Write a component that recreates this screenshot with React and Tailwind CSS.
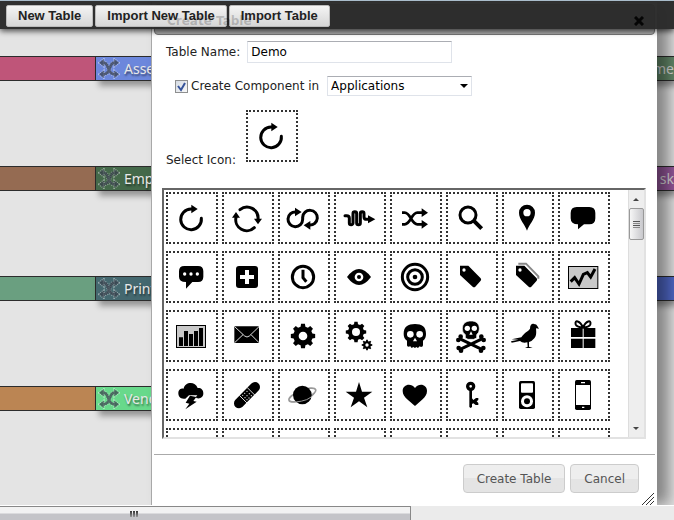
import React from "react";

const laneFont = "font-['Noto_Sans','Open_Sans',sans-serif]";
const dialogFont = "font-['DejaVu_Sans',Verdana,sans-serif]";

function gearPath(cx, cy, outer, inner, teeth, hole) {
  const pts = [];
  const step = (Math.PI * 2) / teeth;
  for (let i = 0; i < teeth; i += 1) {
    const a = i * step - Math.PI / 2;
    [
      [-0.32, inner],
      [-0.2, outer],
      [0.2, outer],
      [0.32, inner],
    ].forEach(([f, r]) => {
      pts.push(`${(cx + Math.cos(a + f * step) * r).toFixed(1)} ${(cy + Math.sin(a + f * step) * r).toFixed(1)}`);
    });
  }
  return `M${pts.join("L")}ZM${cx - hole} ${cy}a${hole} ${hole} 0 1 0 ${hole * 2} 0a${hole} ${hole} 0 1 0 ${-hole * 2} 0Z`;
}

const line = { fill: "none", stroke: "#000", strokeWidth: 9 };

const icons = [
  ["Reload", <>
    <path {...line} d="M106 79A31 31 0 1 1 75 51H80" strokeLinecap="round" />
    <path d="M76 38 95 51 76 64Z" />
  </>],
  ["Sync", <>
    <path {...line} d="M54 53A33 33 0 0 1 108 82M97 107A33 33 0 0 1 42 76" strokeLinecap="round" />
    <path d="M30 77H54L42 60ZM96 80H120L108 97Z" />
  </>],
  ["Loop", <>
    <path {...line} d="M54 60A22 22 0 1 0 74 82V76A22 22 0 1 1 94 99" />
    <path d="M51 47 71 60 51 73ZM97 87V113L77 100Z" />
  </>],
  ["Coil", <>
    <path {...line} d="M33 71H38Q46 71 46 79V93A5.500 5.500 0 0 0 57 93V65A5.500 5.500 0 0 1 68 65V93A5.500 5.500 0 0 0 79 93V65A5.500 5.500 0 0 1 90 65V74Q90 82 98 82H106" strokeLinecap="round" />
    <path d="M102 70V94L124 82Z" />
  </>],
  ["Shuffle", <>
    <path {...line} strokeWidth={8} d="M36 62H44C62 62 64 97 82 97H99M36 97H44C62 97 64 62 82 62H99" />
    <path d="M95 49 114 62 95 75ZM95 84 114 97 95 110Z" />
  </>],
  ["Search", <>
    <circle {...line} strokeWidth={9} cx="66" cy="69" r="24" />
    <path {...line} strokeWidth={12} d="M83 86 107 110" />
  </>],
  ["Place", <path fillRule="evenodd" d="M75 116C69 97 51 82 51 62A24 24 0 0 1 99 62C99 82 81 97 75 116ZM64 62A11 11 0 1 0 86 62A11 11 0 1 0 64 62Z" />],
  ["Comment", <path d="M56 45H94Q112 45 112 63V79Q112 97 94 97H78L60 112V97Q38 97 38 79V63Q38 45 56 45Z" />],
  ["Chat", <>
    <path d="M55 45H96Q112 45 112 61V77Q112 93 96 93H79L60 113V93Q39 93 39 77V61Q39 45 55 45Z" />
    <g fill="#fff"><circle cx="56" cy="69" r="5" /><circle cx="75" cy="69" r="5" /><circle cx="94" cy="69" r="5" /></g>
  </>],
  ["Add", <>
    <rect x="42" y="45" width="66" height="66" rx="9" />
    <path d="M75 57V99M54 78H96" stroke="#fff" strokeWidth="12" />
  </>],
  ["Clock", <>
    <circle {...line} cx="75" cy="78" r="32" />
    <path {...line} d="M75 56V80L85 92" />
  </>],
  ["Eye", <>
    <path d="M39 78Q57 54 75 54T111 78Q93 102 75 102T39 78Z" />
    <circle cx="75" cy="78" r="13" fill="#fff" /><circle cx="75" cy="78" r="6" />
  </>],
  ["Target", <>
    <circle {...line} cx="75" cy="78" r="38" /><circle {...line} cx="75" cy="78" r="22" /><circle cx="75" cy="78" r="7" />
  </>],
  ["Tag", <>
    <path d="M42 44H67L104 82Q107 86 104 89L88 107Q84 110 80 107L42 72Z" />
    <circle cx="54" cy="57" r="5" fill="#fff" />
  </>],
  ["Tags", <>
    <path d="M49 38H72L109 76V83" fill="none" stroke="#888" strokeWidth="6" />
    <path d="M42 44H67L104 82Q107 86 104 89L88 107Q84 110 80 107L42 72Z" />
    <circle cx="54" cy="57" r="5" fill="#fff" />
  </>],
  ["Line chart", <>
    <rect x="31.500" y="46.500" width="88" height="66" fill="#c9c9c9" stroke="#000" strokeWidth="3" />
    <path {...line} d="M38 92 50 80 63 99 76 70 88 65 98 78 111 54" />
  </>],
  ["Bar chart", <>
    <rect x="31.500" y="46.500" width="87" height="66" fill="#c9c9c9" stroke="#000" strokeWidth="3" />
    <path d="M39 82H51V108H39ZM54 63H66V108H54ZM69 72H81V108H69ZM84 63H96V108H84ZM99 54H111V108H99Z" />
  </>],
  ["Mail", <>
    <rect x="37" y="49" width="74" height="50" rx="2" />
    <path d="M38 50 68 78Q75 84 82 78L111 50M38 98 63 74M111 98 87 74" fill="none" stroke="#ddd" strokeWidth="3" />
  </>],
  ["Gear", <path fillRule="evenodd" d={gearPath(75, 78, 37, 29, 8, 13)} />],
  ["Gears", <path fillRule="evenodd" d={gearPath(66, 66, 31, 24, 8, 12) + gearPath(99, 105, 16, 12, 8, 5)} />],
  ["Skull", <>
    <path d="M41 72C41 50 54 42 75 42S108 50 108 72Q108 86 99 92V106Q99 111 93 111L89 109 84 114 79 111 75 114 70 111 65 114 61 109Q51 112 51 106V92Q41 86 41 72Z" />
    <g fill="#fff"><circle cx="61" cy="73" r="10" /><circle cx="89" cy="73" r="10" /><path d="M75 83 81 94H69Z" /></g>
  </>],
  ["Poison", <>
    <path d="M39 85 109 119M111 85 41 119" stroke="#000" strokeWidth="9" />
    <circle cx="37" cy="90" r="7" /><circle cx="44" cy="80" r="7" /><circle cx="113" cy="90" r="7" /><circle cx="106" cy="80" r="7" />
    <circle cx="38" cy="114" r="7" /><circle cx="45" cy="122" r="7" /><circle cx="112" cy="114" r="7" /><circle cx="105" cy="122" r="7" />
    <path d="M49 57C49 40 60 33 75 33S100 40 100 57Q100 68 92 74V84L83 88H66L58 84V74Q49 68 49 57Z" stroke="#fff" strokeWidth="2" />
    <g fill="#fff"><circle cx="64" cy="55" r="8" /><circle cx="85" cy="55" r="8" /><path d="M75 64 80 74H70Z" /></g>
  </>],
  ["Bird", <path d="M27 94 49 89 29 88 58 82C67 67 78 65 84 56C84 44 90 40 96 42Q104 42 106 48L111 56 102 55C103 66 104 78 97 85Q91 93 81 96L81 110 92 114H69L77 110 76 97Q61 100 54 93L29 98Z" />],
  ["Gift", <>
    <path d="M39 54H74V81H39ZM77 54H112V81H77ZM39 86H74V114H39ZM77 86H112V114H77Z" />
    <path d="M75 53C66 31 49 29 53 43Q56 51 75 53C84 31 101 29 97 43Q94 51 75 53Z" fill="none" stroke="#000" strokeWidth="6" />
  </>],
  ["Storm", <>
    <path d="M53 89C42 89 37 82 37 73C37 62 45 58 53 59C56 39 87 35 95 57C105 56 112 62 112 73C112 84 104 90 93 88L89 85 94 79H69L58 89Z" />
    <path d="M72 80 91 84 82 96 92 98 58 121 70 104 59 101Z" />
  </>],
  ["Bandage", <>
    <path d="M51 103 99 54" stroke="#000" strokeWidth="30" strokeLinecap="round" />
    <path d="M52 79 76 103M75 55 99 79" stroke="#ddd" strokeWidth="3" />
    <g fill="#ddd"><circle cx="75" cy="67" r="2" /><circle cx="82" cy="74" r="2" /><circle cx="88" cy="80" r="2" /><circle cx="68" cy="73" r="2" /><circle cx="75" cy="80" r="2" /><circle cx="81" cy="87" r="2" /><circle cx="62" cy="79" r="2" /><circle cx="69" cy="86" r="2" /><circle cx="75" cy="92" r="2" /></g>
  </>],
  ["Planet", <>
    <ellipse cx="73" cy="78" rx="43" ry="14" fill="none" stroke="#999" strokeWidth="5" transform="rotate(-22 73 78)" />
    <circle cx="73" cy="78" r="28" />
    <path d="M33 96Q53 103 86 92Q102 85 110 73" fill="none" stroke="#999" strokeWidth="3" />
  </>],
  ["Star", <path d="M75 39 84 68H115L90 86 100 115 75 97 50 115 60 86 35 68H66Z" />],
  ["Heart", <path d="M75 111C62 98 38 86 38 66C38 47 62 40 75 57C88 40 111 47 111 66C111 86 88 98 75 111Z" />],
  ["Key", <>
    <circle {...line} strokeWidth={10} cx="74" cy="52" r="9" />
    <path d="M70 62H78V88L82 93 90 87H97V93L92 97 97 102V108H89L82 103 78 105V114L74 117 70 114Z" />
  </>],
  ["Player", <>
    <rect x="51" y="36" width="48" height="84" rx="5" />
    <rect x="57" y="43" width="36" height="28" rx="3" fill="#fff" />
    <circle cx="75" cy="97" r="18" fill="#fff" /><circle cx="75" cy="97" r="9" />
  </>],
  ["Phone", <>
    <rect x="51" y="33" width="48" height="90" rx="5" />
    <path d="M54 48H96V108H54Z" fill="#fff" />
    <path d="M69 41H81M72 115H79" stroke="#fff" strokeWidth="4" />
  </>],
];

const spares = ["Slot 33", "Slot 34", "Slot 35", "Slot 36", "Slot 37", "Slot 38", "Slot 39", "Slot 40"];

function Glyph({ children }) {
  return (
    <svg viewBox="6 6 144 144" className="size-full" aria-hidden="true">
      {children}
    </svg>
  );
}

function JoinIcon() {
  const curve = "M4 4H5C11 4 8 16 16 16H17M4 16H5C13 16 10 4 16 4H17";
  const heads = "M0 4 5 0V8ZM21 4 16 0V8ZM0 16 5 12V20ZM21 16 16 12V20Z";
  return (
    <svg viewBox="-1 -1 23 22" className="h-[21px] w-[22px] shrink-0" aria-hidden="true">
      <g fill="none" stroke="#fff" strokeOpacity=".45">
        <path d={curve} strokeWidth="4" strokeDasharray="1 1" />
        <path d={heads} strokeWidth="2" strokeDasharray="1 1" />
      </g>
      <g opacity=".7">
        <path d={curve} fill="none" stroke="#333b47" strokeWidth="3" />
        <path d={heads} fill="#333b47" />
      </g>
    </svg>
  );
}

const lanes = [
  { name: "Assets", bar: "bg-[#bf5579]", node: "bg-[#6c87dc]", tail: "bg-[#64896a]", end: "me" },
  { name: "Employees", bar: "bg-[#956b52]", node: "bg-[#44694a]", tail: "bg-[#96589c]", end: "sk" },
  { name: "Printers", bar: "bg-[#6a9f80]", node: "bg-[#44686f]", tail: "bg-[#5068c8]", end: "" },
  { name: "Vendors", bar: "bg-[#bb8553]", node: "bg-[#68d98b]", tail: null, end: "" },
];

function Lane({ lane }) {
  return (
    <div className="flex h-[25px]">
      <div className={`w-24 border border-l-0 border-[#2c2c2c] ${lane.bar}`} />
      <div className={`flex w-40 items-center gap-1 border-y border-[#2c2c2c] pl-[2px] text-sm text-[#e8e8e8] shadow-[3px_5px_6px_rgba(0,0,0,.35)] [text-shadow:1px_2px_2px_rgba(0,0,0,.5)] ${lane.node}`}>
        <JoinIcon />
        {lane.name}
      </div>
      {lane.tail && (
        <div className={`ml-auto flex w-10 items-center justify-end border-y border-[#2c2c2c] text-sm text-[#ddd] shadow-[3px_5px_6px_rgba(0,0,0,.35)] ${lane.tail}`}>
          {lane.end}
        </div>
      )}
    </div>
  );
}

function ToolButton({ children }) {
  return (
    <button className="h-[22px] rounded-[2px] border border-[#bbb] bg-linear-to-b from-[#f4f4f4] to-[#d6d6d6] px-[11px] text-[13px] leading-5 font-bold whitespace-nowrap text-[#222]">
      {children}
    </button>
  );
}

function DialogButton({ children }) {
  return (
    <button className="h-[29px] rounded-[4px] border border-[#ccc] bg-linear-to-b from-[#eee] from-50% to-[#e4e4e4] to-50% px-[13px] whitespace-nowrap text-[#555]">
      {children}
    </button>
  );
}

function ListScrollbar() {
  return (
    <div className="flex w-4 shrink-0 flex-col items-center justify-between bg-[#eee] pb-1 shadow-[inset_1px_0_#ddd]">
      <div className="flex w-full flex-col items-center">
        <svg viewBox="0 0 8 4" className="my-[7px] h-1 w-2" aria-hidden="true"><path d="M1 4 4 1 7 4Z" fill="#444" /></svg>
        <div className="flex h-8 w-[15px] flex-col items-center justify-center gap-px rounded-[2px] border border-[#999] bg-linear-to-r from-[#f6f6f6] to-[#c8c8cc]">
          <i className="h-px w-[7px] bg-[#555]" />
          <i className="h-px w-[7px] bg-[#888]" />
          <i className="h-px w-[7px] bg-[#555]" />
          <i className="h-px w-[7px] bg-[#888]" />
        </div>
      </div>
      <svg viewBox="0 0 8 4" className="mb-[2px] h-1 w-2" aria-hidden="true"><path d="M1 0 4 3 7 0Z" fill="#444" /></svg>
    </div>
  );
}

function CreateTableDialog() {
  return (
    <section aria-label="Create Table" className={`absolute top-[2px] right-[17px] bottom-0 left-[151px] flex flex-col border-l border-[#a8a8a8] bg-white px-[2px] text-xs text-[#222] shadow-[12px_0_14px_rgba(0,0,0,.42)] ${dialogFont}`}>
      <header className="mt-[2px] flex h-[31px] shrink-0 items-center justify-between rounded-[4px] border border-[#777] bg-[#aaa] pt-[3px] pr-[10px] pl-3">
        <h2 className="pointer-events-none relative z-30 font-bold text-black/20">Create Table</h2>
        <button aria-label="Close" className="relative z-30">
          <svg viewBox="0 0 10 10" className="size-[10px]" aria-hidden="true"><path d="M1 1 9 9M9 1 1 9" stroke="#050505" strokeWidth="3" /></svg>
        </button>
      </header>
      <div className="px-2">
        <div className="mt-[6px] flex h-[22px] items-center gap-[7px] pl-1">
          <label htmlFor="table-name">Table Name:</label>
          <input id="table-name" defaultValue="Demo" className="h-[22px] w-[205px] border border-[#dfe3ea] border-t-[#abadb3] px-[3px] text-black" />
        </div>
        <div className="mt-[13px] flex h-5 items-center pl-[13px]">
          <input id="in-component" type="checkbox" defaultChecked className="size-[13px] appearance-none border border-[#8e8f8f] bg-linear-to-br from-[#d5dbe3] to-[#f8f8f8]" />
          <svg viewBox="0 0 13 13" className="pointer-events-none -ml-[13px] size-[13px]" aria-hidden="true"><path d="M3 6 6 10 10 3" fill="none" stroke="#35539a" strokeWidth="2" /></svg>
          <label htmlFor="in-component" className="ml-[3px]">Create Component in</label>
          <div className="ml-2 flex items-center">
            <select aria-label="Component" className="h-5 w-[145px] appearance-none border border-[#dfe3ea] border-t-[#abadb3] bg-white px-[3px] leading-4 text-black">
              <option>Applications</option>
            </select>
            <svg viewBox="0 0 8 4" className="pointer-events-none -ml-3 h-1 w-2" aria-hidden="true"><path d="M0 0 4 4 8 0Z" /></svg>
          </div>
        </div>
        <div className="mt-[14px] flex items-end gap-[10px] pl-1">
          <span className="-mb-2 leading-5">Select Icon:</span>
          <button aria-label="Selected icon" className="size-[52px] border-2 border-dotted border-[#333]">
            <Glyph>{icons[0][1]}</Glyph>
          </button>
        </div>
        <div className="mt-[26px] mr-[1px] flex h-[251px] border-2 border-t-[#666] border-r-[#e2e2e2] border-b-[#e2e2e2] border-l-[#666]">
          <div className="grid flex-1 grid-cols-[repeat(auto-fill,52px)] content-start gap-x-1 gap-y-[7px] overflow-hidden pt-[2px] pl-[2px]">
            {icons.map(([name, art]) => (
              <button key={name} aria-label={name} className="size-[52px] border-2 border-dotted border-[#333]">
                <Glyph>{art}</Glyph>
              </button>
            ))}
            {spares.map((name) => (
              <button key={name} aria-label={name} className="size-[52px] border-2 border-dotted border-[#333]" />
            ))}
          </div>
          <ListScrollbar />
        </div>
      </div>
      <footer className="mt-[15px] flex justify-end gap-[5px] border-t border-[#aaa] pt-[9px] pr-4">
        <DialogButton>Create Table</DialogButton>
        <DialogButton>Cancel</DialogButton>
      </footer>
      <svg viewBox="0 0 12 12" className="mr-px ml-auto size-3 shrink-0" aria-hidden="true"><path d="M0 12 12 0M4 12 12 4M8 12 12 8" stroke="#333" /></svg>
    </section>
  );
}

export default function App() {
  return (
    <div className={`flex h-screen flex-col overflow-hidden bg-[#e4e4e4] ${laneFont}`}>
      <main className="relative flex min-h-0 flex-1 flex-col overflow-hidden">
        <nav className="relative z-20 flex h-[29px] shrink-0 items-start gap-[2px] border-t border-[#a9bccb] bg-[#292929]/97 pt-1 pl-[6px] font-['Liberation_Sans',Arial,sans-serif] shadow-[0_2px_6px_rgba(0,0,0,.7)]">
          <ToolButton>New Table</ToolButton>
          <ToolButton>Import New Table</ToolButton>
          <ToolButton>Import Table</ToolButton>
        </nav>
        <div className="flex flex-col gap-[85px] pt-[27px]">
          {lanes.map((lane) => <Lane key={lane.name} lane={lane} />)}
        </div>
        <CreateTableDialog />
      </main>
      <div className="flex h-[15px] shrink-0 border-t border-white bg-[#ebebeb]">
        <div className="flex w-[61%] items-center justify-center border-t border-r border-[#888] bg-linear-to-b from-[#f2f2f2] from-45% to-[#c4c4c8] to-55%">
          <div className="mr-[142px] flex gap-px">
            <i className="h-[6px] w-[2px] bg-linear-to-b from-[#333] to-[#999]" />
            <i className="h-[6px] w-[2px] bg-linear-to-b from-[#333] to-[#999]" />
            <i className="h-[6px] w-[2px] bg-linear-to-b from-[#333] to-[#999]" />
          </div>
        </div>
      </div>
    </div>
  );
}
